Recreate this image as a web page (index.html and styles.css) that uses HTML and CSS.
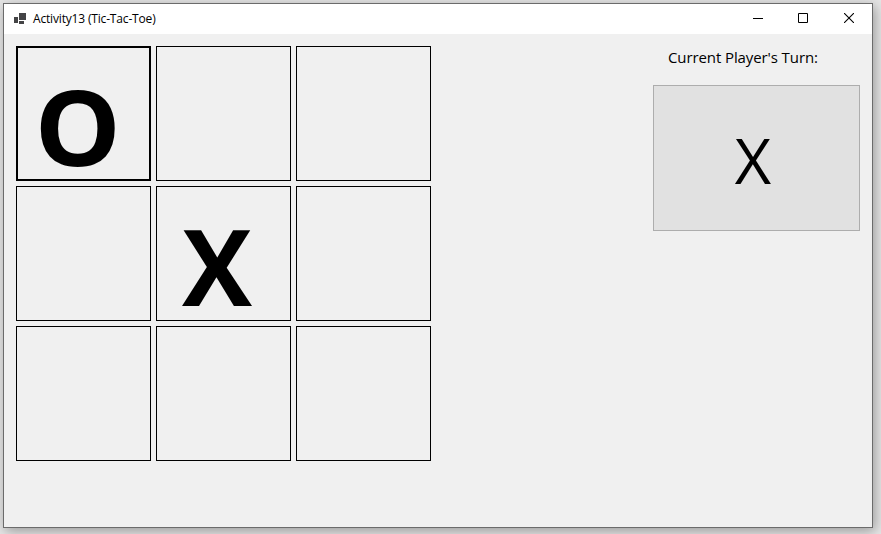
FILE: index.html
```
<!DOCTYPE html>
<html lang="en">
<head>
<meta charset="utf-8">
<title>Activity13 (Tic-Tac-Toe)</title>
<link rel="stylesheet" href="styles.css">
</head>
<body>
<div class="window">
  <header class="titlebar">
    <svg class="app-icon" width="13" height="12" viewBox="0 0 13 12" fill="#444446" shape-rendering="crispEdges"><path d="M5 0h7v7H5zM0 4h4v6H0zM5 8h5v3H5z"/></svg>
    <h1 class="title">Activity13 (Tic-Tac-Toe)</h1>
    <div class="controls">
      <svg class="minimize" width="10" height="10" viewBox="0 0 10 10"><path d="M0 5.5h10" stroke="#000"/></svg>
      <svg width="10" height="10" viewBox="0 0 10 10"><path d="M.5.5h9v9h-9z" stroke="#000" fill="none"/></svg>
      <svg width="10" height="10" viewBox="0 0 10 10"><path d="M0 0l10 10M10 0L0 10" stroke="#000" stroke-width="1.1"/></svg>
    </div>
  </header>
  <main class="content">
    <div class="board">
      <div class="cell focused"><span class="mark-o">O</span></div><div class="cell"></div><div class="cell"></div>
      <div class="cell"></div><div class="cell">X</div><div class="cell"></div>
      <div class="cell"></div><div class="cell"></div><div class="cell"></div>
    </div>
    <aside class="turn">
      <p class="label">Current Player's Turn:</p>
      <button class="player">X</button>
    </aside>
  </main>
</div>
</body>
</html>
```
FILE: styles.css
```
* { box-sizing: border-box; }
body {
  margin: 0;
  padding: 3px;
  height: 534px;
  overflow: hidden;
  background: #e6e6e6;
  font-family: "Open Sans", sans-serif;
  color: #000;
}
.window {
  width: 870px;
  height: 525px;
  border: 1px solid #6b6b6b;
  background: #f0f0f0;
  box-shadow: 2px 3px 12px rgba(0, 0, 0, .34);
}
.titlebar {
  display: flex;
  align-items: center;
  height: 30px;
  padding: 0 18px 0 10px;
  background: #fff;
}
.app-icon { margin-top: -1px; }
.title {
  margin: 0 0 0 6px;
  font-size: 12px;
  font-weight: 400;
  line-height: 16px;
  letter-spacing: -.17px;
  white-space: nowrap;
}
.controls {
  display: flex;
  gap: 36px;
  margin-left: auto;
  margin-top: -2px;
}
.controls svg { display: block; }
.controls .minimize { margin-right: -1px; }
.content {
  display: flex;
  justify-content: space-between;
  padding: 12px 12px 0;
}
.board {
  display: grid;
  grid-template-columns: repeat(3, 135px);
  grid-auto-rows: 135px;
  gap: 5px;
}
.cell {
  border: 1px solid #000;
  padding: 24px 13px 0 0;
  font-size: 105px;
  font-weight: 700;
  line-height: 109px;
  text-align: center;
}
.focused {
  border-width: 2px;
  padding: 23px 12px 0 0;
}
.mark-o {
  display: inline-block;
  transform: scale(1.035, .99);
}
.turn { width: 207px; }
.label {
  margin: 0 0 17px;
  padding-left: 15px;
  font-size: 15px;
  line-height: 22px;
  letter-spacing: -.1px;
  white-space: nowrap;
}
.player {
  display: block;
  width: 207px;
  height: 146px;
  padding: 3px 7px 0 0;
  border: 1px solid #adadad;
  background: #e1e1e1;
  font: 400 63px/86px "Open Sans", sans-serif;
  color: #000;
}
```
